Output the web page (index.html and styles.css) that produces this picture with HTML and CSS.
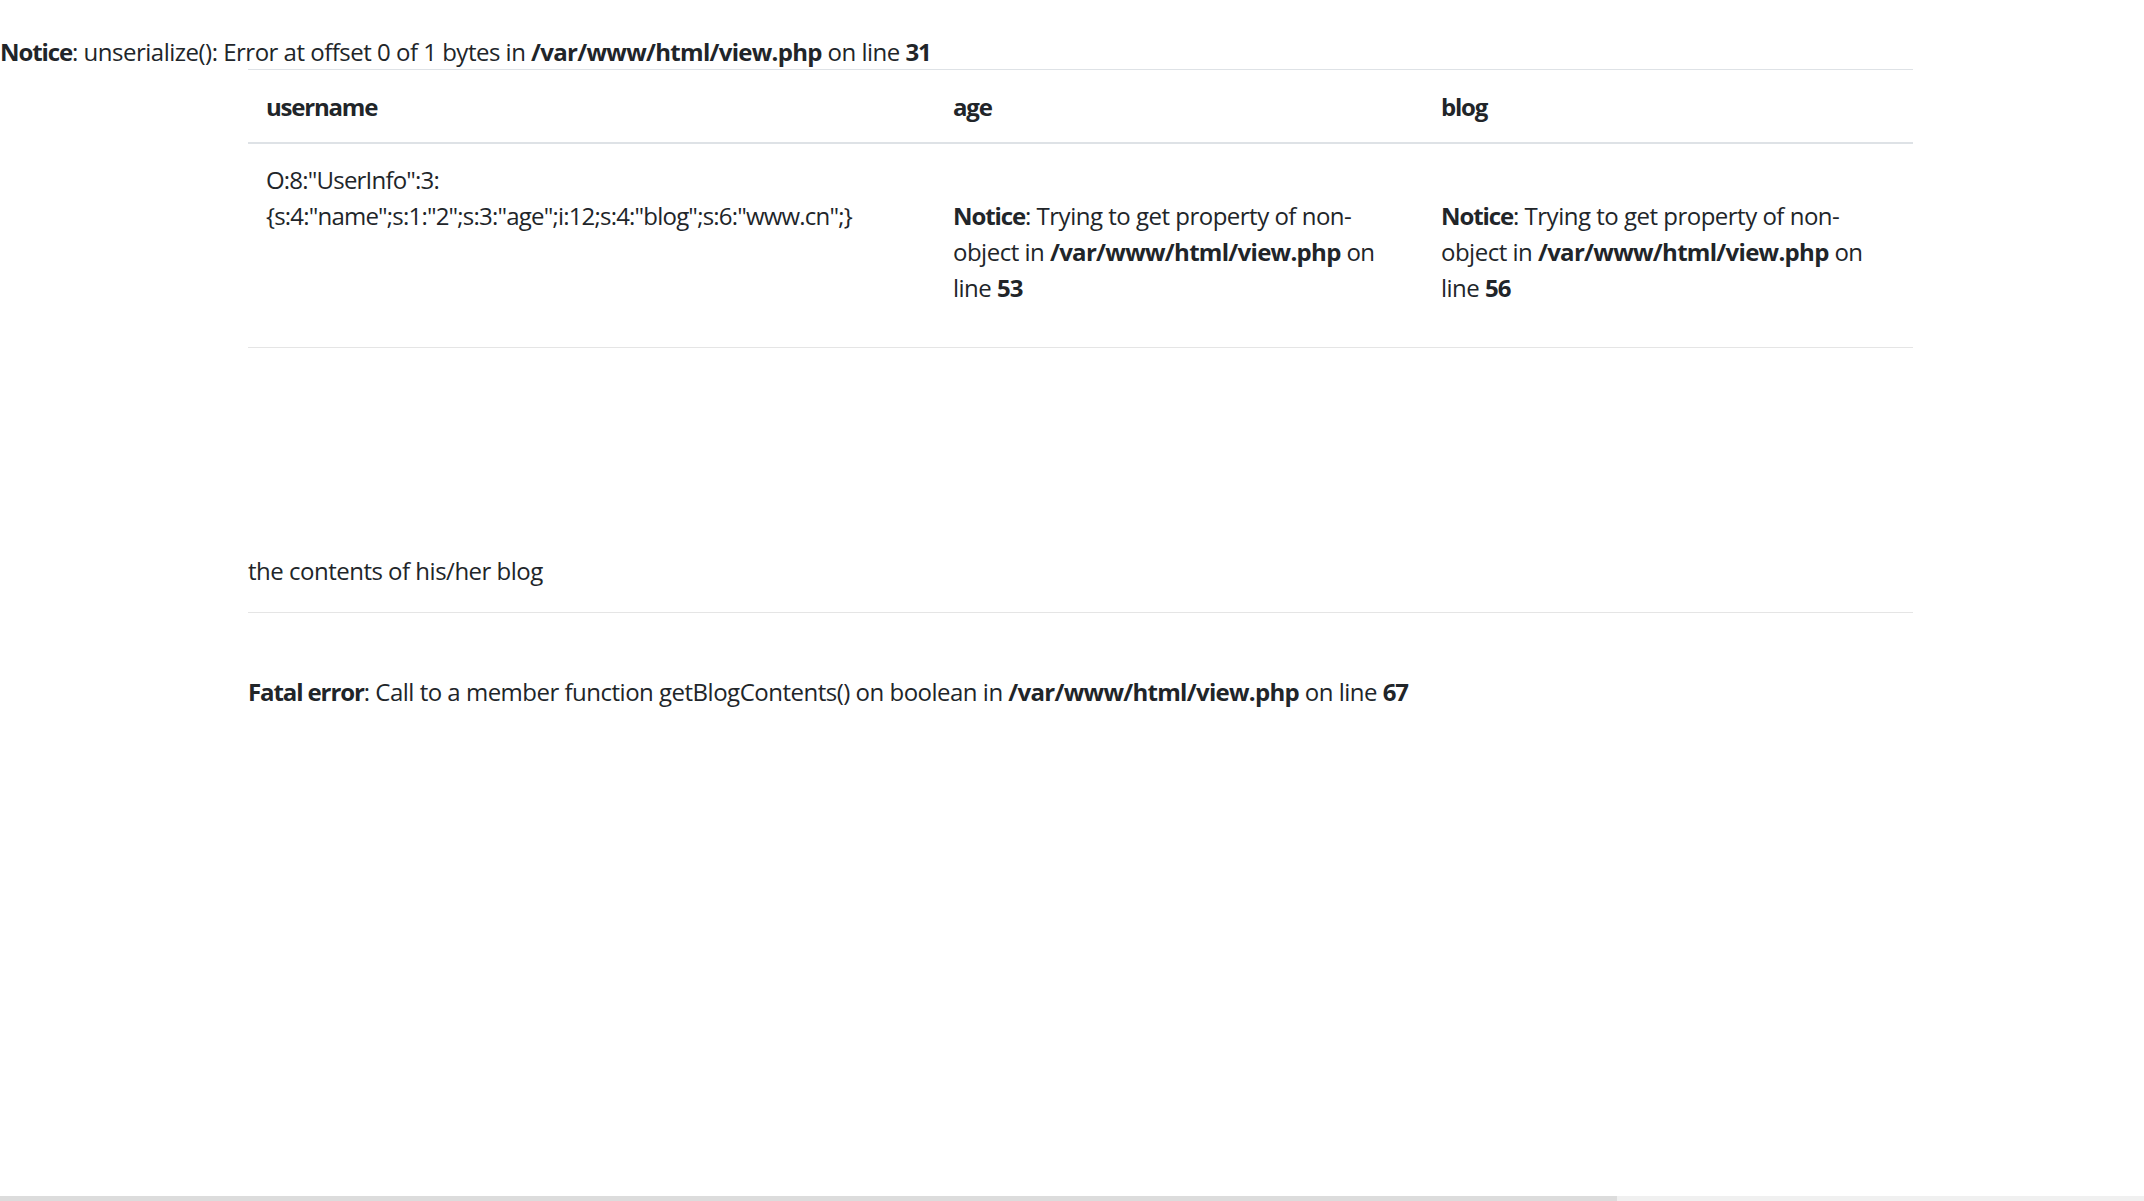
FILE: index.html
```html
<!DOCTYPE html>
<html lang="en">
<head>
<meta charset="utf-8">
<title>view</title>
<link rel="stylesheet" href="styles.css">
</head>
<body>
<div class="php-notice"><b>Notice</b>: unserialize(): Error at offset 0 of 1 bytes in <b class="path">/var/www/html/view.php</b> on line <b>31</b></div>
<div class="container">
  <table class="table">
    <thead>
      <tr>
        <th class="col-user">username</th>
        <th class="col-age">age</th>
        <th class="col-blog">blog</th>
      </tr>
    </thead>
    <tbody>
      <tr>
        <td><span class="serial">O:8:"UserInfo":3:<br>{s:4:"name";s:1:"2";s:3:"age";i:12;s:4:"blog";s:6:"www.cn";}</span></td>
        <td><br><b>Notice</b>: Trying to get property of non-<br>object in <b class="path">/var/www/html/view.php</b> on<br>line <b>53</b></td>
        <td><br><b>Notice</b>: Trying to get property of non-<br>object in <b class="path">/var/www/html/view.php</b> on<br>line <b>56</b></td>
      </tr>
    </tbody>
  </table>
  <hr class="rule rule-first">
  <div class="gap"></div>
  <p class="blog-title">the contents of his/her blog</p>
  <hr class="rule">
  <div class="fatal"><br><b>Fatal error</b>: Call to a member function getBlogContents() on boolean in <b class="path">/var/www/html/view.php</b> on line <b>67</b></div>
</div>
<div class="hscroll"><div class="hscroll-thumb"></div></div>
</body>
</html>
```

FILE: styles.css
```css
html, body {
  margin: 0;
  padding: 0;
  background: #ffffff;
}

body {
  font-family: "Open Sans", "Noto Sans", "Liberation Sans", sans-serif;
  font-size: 24px;
  line-height: 36px;
  color: #212529;
  letter-spacing: -0.5px;
}

b {
  font-weight: 700;
  letter-spacing: -1.1px;
}

b.path {
  letter-spacing: -0.7px;
}

.serial {
  letter-spacing: -0.8px;
}

.php-notice {
  padding-top: 34px;
  height: 35px;
  white-space: nowrap;
}

.container {
  width: 1665px;
  margin-left: 248px;
}

.table {
  width: 100%;
  border-collapse: collapse;
  table-layout: fixed;
  margin: 0;
}

.table th {
  text-align: left;
  font-weight: 700;
  letter-spacing: -1.2px;
  padding: 19px 18px 17px;
  border-top: 1px solid #dee2e6;
  border-bottom: 2px solid #dee2e6;
  vertical-align: bottom;
}

.col-user { width: 651px; }
.col-age { width: 452px; }
.col-blog { width: 454px; }

.table td {
  padding: 18px 18px 18px;
  vertical-align: top;
  white-space: nowrap;
}

.rule {
  border: 0;
  border-top: 1px solid rgba(0, 0, 0, 0.1);
  margin: 0;
  height: 0;
}

.rule-first {
  margin-top: 23px;
}

.gap {
  height: 205px;
}

.blog-title {
  margin: 0 0 23px;
}

.fatal {
  margin-top: 25px;
  white-space: nowrap;
}

.hscroll {
  position: fixed;
  left: 0;
  right: 0;
  bottom: 0;
  height: 5px;
  background: #f0f0f0;
}

.hscroll-thumb {
  width: 1617px;
  height: 5px;
  background: #dcdcdc;
}
```
